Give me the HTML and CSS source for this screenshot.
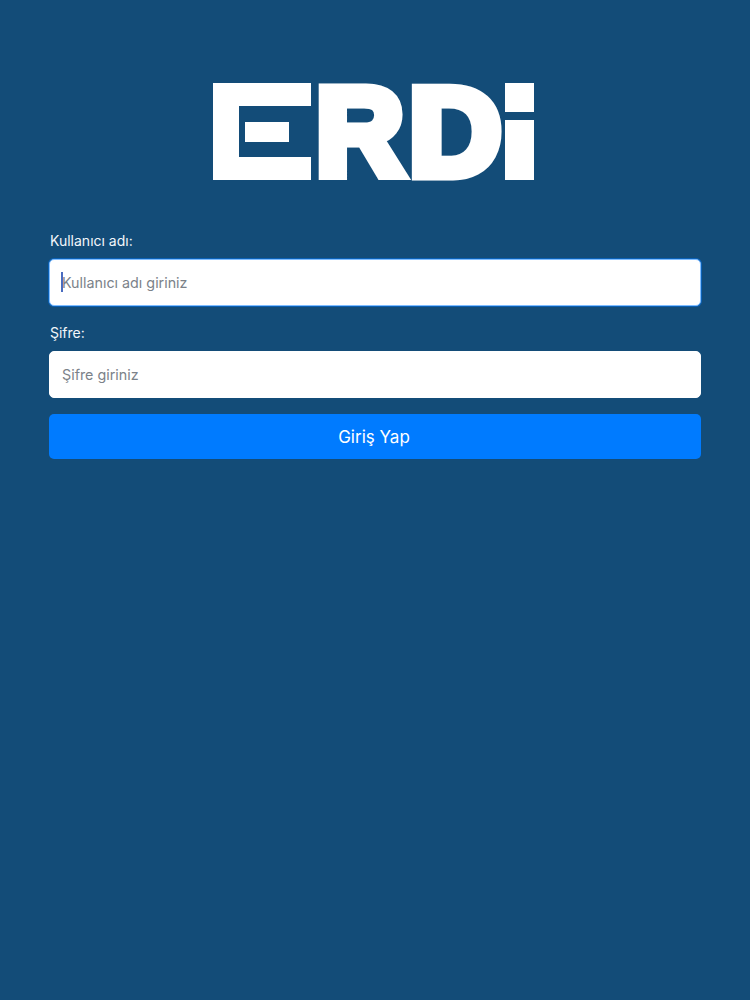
FILE: index.html
```html
<!doctype html>
<html lang="tr">
<head>
  <meta charset="UTF-8">
  <title>Giriş Yap</title>
  <link rel="stylesheet" href="styles.css">
</head>
<body>
<div class="page-wrapper">
  <div class="logo-wrap">
    <svg class="logo" width="322" height="146" viewBox="0 -24 322 146" role="img" aria-label="ERDi">
      <!-- E -->
      <path class="logo-fill" fill-rule="evenodd" d="M0 0H98V23H26V74H98V97H0Z"/>
      <rect class="logo-fill" x="32" y="39" width="44" height="20"/>
      <!-- R D -->
      <text class="logo-letter" transform="translate(103 91.5) scale(.98 1)">R</text>
      <text class="logo-letter" transform="translate(196 91.5) scale(1.03 1)">D</text>
      <!-- i -->
      <rect class="logo-fill" x="292" y="0" width="29" height="29"/>
      <rect class="logo-fill" x="292" y="37" width="29" height="60"/>
    </svg>
  </div>
  <form class="login-form">
    <label class="field-label" for="user">Kullanıcı adı:</label>
    <div class="field-wrap">
      <input class="field-input field-input-focus" id="user" type="text" placeholder="Kullanıcı adı giriniz">
      <span class="field-caret"></span>
    </div>
    <label class="field-label" for="pass">Şifre:</label>
    <div class="field-wrap field-wrap-last">
      <input class="field-input" id="pass" type="password" placeholder="Şifre giriniz">
    </div>
    <button class="submit-btn" type="button">Giriş Yap</button>
  </form>
</div>
</body>
</html>
```

FILE: styles.css
```css
* {
  box-sizing: border-box;
}

html,
body {
  height: 100%;
}

body {
  margin: 0;
  background: #134c78;
  font-family: "Inter", "Liberation Sans", sans-serif;
}

.page-wrapper {
  padding: 59px 49px 0;
}

.logo-wrap {
  display: flex;
  justify-content: center;
  margin-bottom: 27px;
}

.logo {
  display: block;
  margin-right: 2px;
}

.logo-fill {
  fill: #fff;
}

.logo-letter {
  font-family: "Liberation Sans", sans-serif;
  font-weight: 700;
  font-size: 124px;
  fill: #fff;
  stroke: #fff;
  stroke-width: 11px;
}

.login-form {
  display: flex;
  flex-direction: column;
}

.field-label {
  color: #f2f6fa;
  font-size: 14px;
  line-height: 18px;
  margin-bottom: 9px;
  padding-left: 1px;
}

.field-wrap {
  position: relative;
  margin-bottom: 18px;
}

.field-wrap-last {
  margin-bottom: 16px;
}

.field-input {
  display: block;
  width: 100%;
  height: 47px;
  padding: 0 12px;
  border: 1px solid #fff;
  border-radius: 5px;
  background: #fff;
  color: #333;
  font-family: inherit;
  font-size: 14.3px;
  outline: none;
}

.field-input-focus {
  border-color: #80bdff;
  box-shadow: 0 0 0 1px rgba(0, 123, 255, .45);
}

.field-input::placeholder {
  color: #7b8289;
  opacity: 1;
}

.field-caret {
  position: absolute;
  left: 12px;
  top: 13px;
  width: 2px;
  height: 20px;
  background: #4a6cc0;
}

.submit-btn {
  height: 45px;
  padding: 0 2px 0 0;
  border: 0;
  border-radius: 5px;
  background: #007bff;
  color: #fff;
  font-family: inherit;
  font-size: 17px;
}
```
